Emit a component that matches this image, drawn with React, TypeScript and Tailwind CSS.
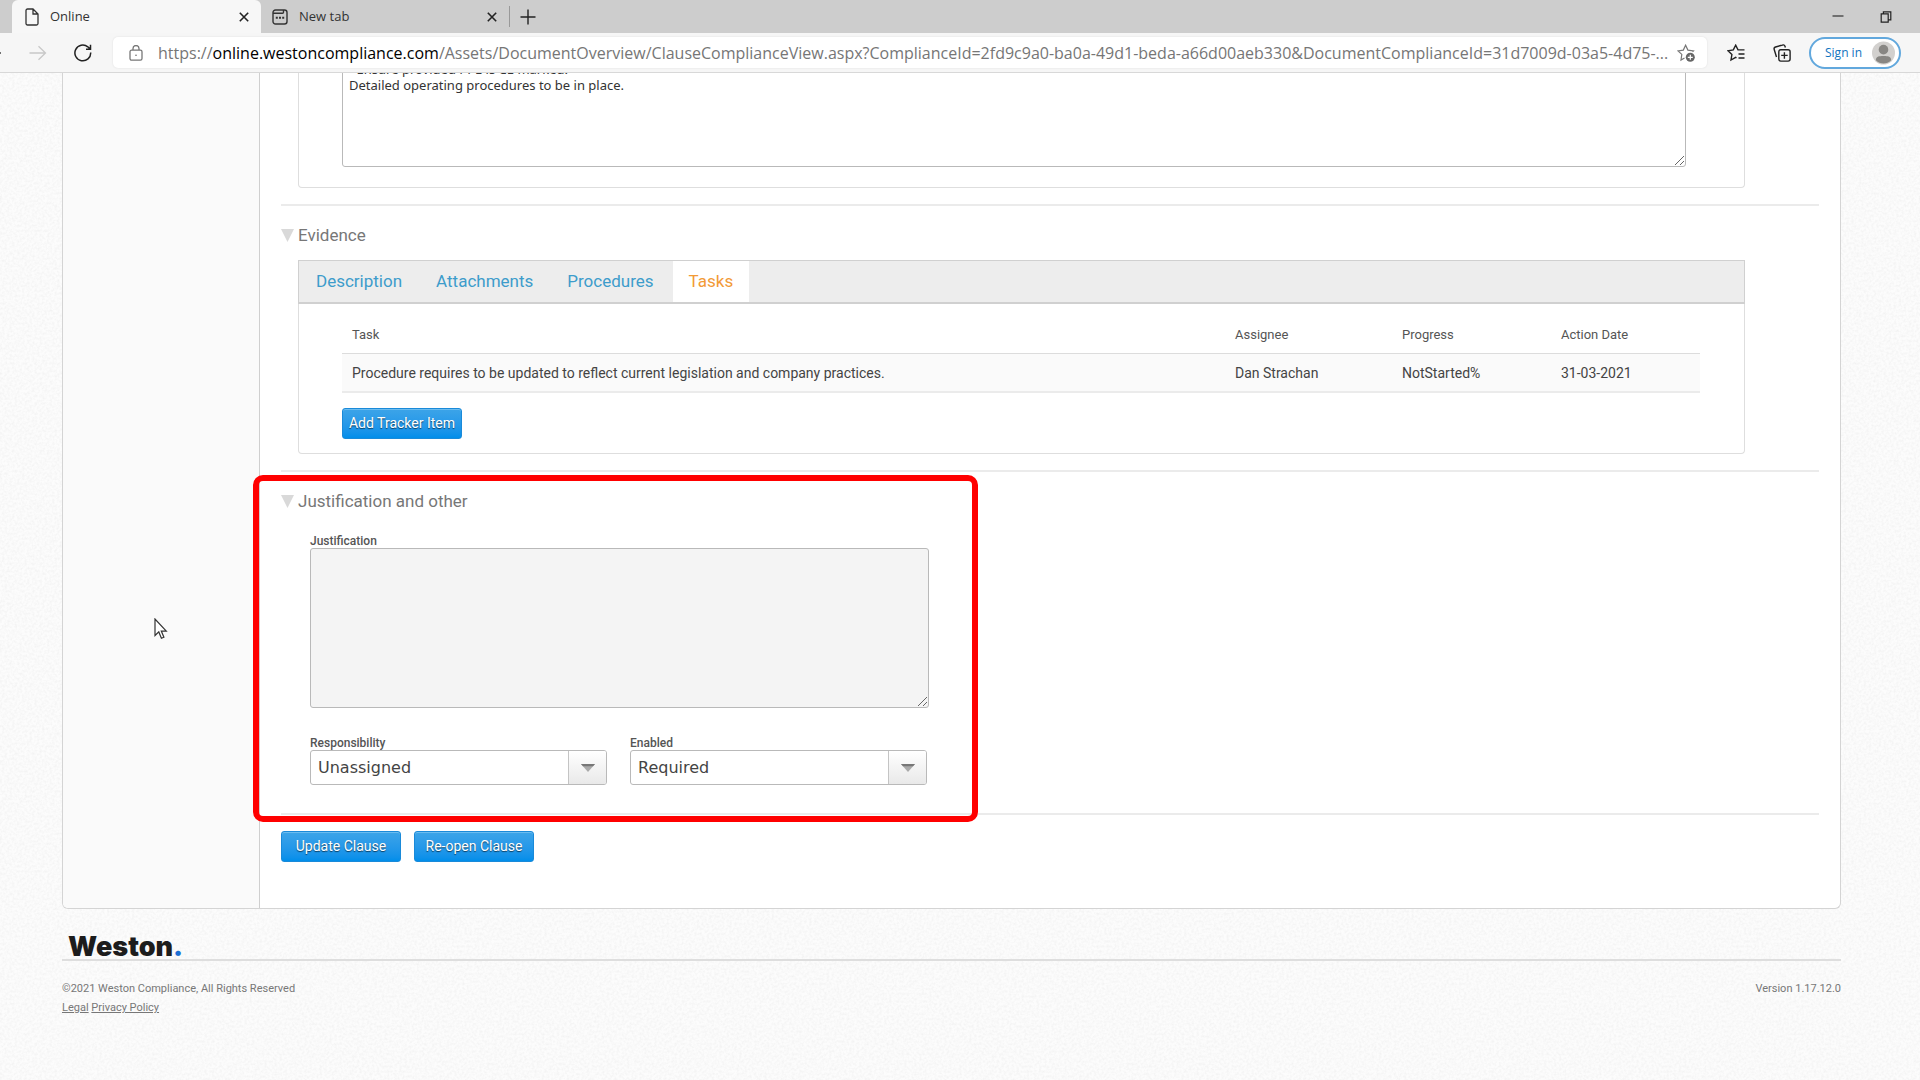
import React from "react";

const btn =
  "h-[31px] rounded-[3px] border border-[#1a8ad9] bg-gradient-to-b from-[#3ca4e8] to-[#008eea] text-[14px] leading-[18px] text-white shadow-[inset_0_1px_0_#6bbcf0] [text-shadow:0_1px_1px_#0009] pb-0.5";

function PageIcon() {
  return (
    <svg width="14" height="18" viewBox="0 0 14 18" fill="none" stroke="#333" strokeWidth="1.3">
      <path d="M2.500 1H8l5 5v9.500a1.500 1.500 0 0 1-1.500 1.500h-9A1.500 1.500 0 0 1 1 15.500v-13A1.500 1.500 0 0 1 2.500 1zM8 1v5h5" />
    </svg>
  );
}

function NewTabIcon() {
  return (
    <svg width="16" height="16" viewBox="0 0 16 16" fill="none" stroke="#333" strokeWidth="1.4">
      <rect x="1" y="1" width="14" height="14" rx="2.500" />
      <path d="M1 4.200h9.500a1 1 0 0 0 1-1V1" />
      <path d="M3.800 8.700h2M7 8.700h2M10.200 8.700h2" strokeWidth="2" />
    </svg>
  );
}

function CloseIcon() {
  return (
    <svg width="10" height="10" viewBox="0 0 10 10" stroke="#222" strokeWidth="1.600">
      <path d="M.8.800l8.400 8.400M9.200.800L.8 9.200" />
    </svg>
  );
}

function TabStrip() {
  return (
    <div className="flex h-[33px] items-stretch bg-[#cdcdcd] pl-3 text-[13px] text-[#333]">
      <div className="flex w-[249px] items-center rounded-t-md bg-[#f7f7f7] pr-3 pl-[13px]">
        <PageIcon />
        <span className="ml-[11px] flex-1">Online</span>
        <button aria-label="Close Online"><CloseIcon /></button>
      </div>
      <div className="flex w-[248px] items-center pr-3 pl-[11px]">
        <NewTabIcon />
        <span className="ml-[11px] flex-1">New tab</span>
        <button aria-label="Close New tab"><CloseIcon /></button>
      </div>
      <div className="my-1.5 w-px bg-[#999]" />
      <button aria-label="Open tab" className="ml-2.5">
        <svg width="16" height="16" viewBox="0 0 16 16" stroke="#222" strokeWidth="1.400"><path d="M8 .5v15M.5 8h15" /></svg>
      </button>
      <div className="flex-1" />
      <div className="flex items-center gap-9 pr-7">
        <button aria-label="Minimize">
          <svg width="12" height="12" viewBox="0 0 12 12" stroke="#333" strokeWidth="1.200"><path d="M0.500 5h11" /></svg>
        </button>
        <button aria-label="Restore">
          <svg width="12" height="12" viewBox="0 0 12 12" fill="none" stroke="#222" strokeWidth="1.200"><path d="M1.200 2.800h7v8.400h-7zM3.400 2.800V.8h7.400v8H8.400" /></svg>
        </button>
      </div>
    </div>
  );
}

function Toolbar() {
  return (
    <div className="flex h-10 items-center border-b border-[#d8d8d8] bg-[#f6f6f6] pr-[19px]">
      <button aria-label="Back" className="w-7">
        <svg width="4" height="16" viewBox="0 0 4 16" stroke="#444" strokeWidth="1.400"><path d="M0 8h1" /></svg>
      </button>
      <button aria-label="Forward">
        <svg width="20" height="16" viewBox="0 0 20 16" fill="none" stroke="#c8c8c8" strokeWidth="1.300"><path d="M1.500 8h16M10.500 1.200L17.500 8l-7 6.800" /></svg>
      </button>
      <button aria-label="Refresh" className="ml-[26px]">
        <svg width="18" height="18" viewBox="0 0 18 18" fill="none" stroke="#222" strokeWidth="1.500"><path d="M16.700 8.500A7.900 7.900 0 1 1 13.800 2.800L16.200 5M16.500.8v4.500h-4.500" /></svg>
      </button>
      <div className="ml-[21px] flex h-[31px] min-w-0 flex-1 items-center rounded-[5px] bg-white pr-3 pl-4 shadow-[0_0_2px_#ddd]">
        <svg width="14" height="16" viewBox="0 0 14 16" fill="none" stroke="#777" strokeWidth="1.300">
          <rect x="1" y="5.200" width="12" height="10" rx="1.600" /><path d="M4 5V3.500a3 3 0 0 1 6 0V5" /><circle cx="7" cy="10.200" r=".8" fill="#666" stroke="none" />
        </svg>
        <div className="ml-[15px] min-w-0 flex-1 truncate text-[16px] text-[#767676]">
          https://<span className="text-black">online.westoncompliance.com</span>/Assets/DocumentOverview/ClauseComplianceView.aspx?ComplianceId=2fd9c9a0-ba0a-49d1-beda-a66d00aeb330&amp;DocumentComplianceId=31d7009d-03a5-4d75-...
        </div>
        <button aria-label="Add to favorites">
          <svg width="18" height="18" viewBox="0 0 18 18" fill="none" stroke="#777" strokeWidth="1.200">
            <path d="M7.500 14L4 16l.8-5.600L1 6.900l5.300-.8L8.600 1.200l2.300 4.900 5.600.8-1 1" /><circle cx="13.300" cy="13.300" r="4.500" fill="#666" stroke="none" /><path d="M13.300 10.800v5M10.800 13.300h5" stroke="#fff" />
          </svg>
        </button>
      </div>
      <button aria-label="Favorites" className="ml-5">
        <svg width="18" height="18" viewBox="0 0 18 18" fill="none" stroke="#222" strokeWidth="1.400"><path d="M9.500 13.800L8.700 13.400 4 16l.9-5.500L1 6.700l5.300-.8L8.700 1.200l2.300 4.700h6.500M11.500 10h6M11.500 14h6" /></svg>
      </button>
      <button aria-label="Collections" className="ml-7">
        <svg width="18" height="18" viewBox="0 0 18 18" fill="none" stroke="#222" strokeWidth="1.400"><rect x="5.800" y="5.800" width="11.300" height="11.300" rx="2" /><path d="M11.400 8.200v6.500M8.200 11.400h6.500M3.500 13L1.200 5.500A2 2 0 0 1 2.500 3L9.500 1a2 2 0 0 1 2.500 1.300l.4 1.200" /></svg>
      </button>
      <button className="ml-[18px] flex h-8 w-[92px] items-center justify-between rounded-full border-2 border-[#62a8dd] bg-white pr-1 pl-3.5 text-[12px] text-[#1173c0]">
        Sign in
        <svg width="23" height="24" viewBox="0 0 24 24"><circle cx="12" cy="12" r="12" fill="#d2d0ce" /><circle cx="12" cy="8.500" r="5" fill="#888683" /><path d="M4 19.500c0-4 3-4.500 8-4.500s8 .5 8 4.500c-4.500 4.600-11.500 4.600-16 0z" fill="#888683" /></svg>
      </button>
    </div>
  );
}

function PaperTexture() {
  return (
    <svg className="pointer-events-none absolute inset-0 h-full w-full" aria-hidden="true">
      <filter id="paper">
        <feTurbulence type="fractalNoise" baseFrequency="0.4" numOctaves="2" stitchTiles="stitch" />
        <feColorMatrix values="0 0 0 0 0  0 0 0 0 0  0 0 0 0 0  0.07 0 0 0 -0.025" />
      </filter>
      <rect width="100%" height="100%" filter="url(#paper)" />
    </svg>
  );
}

function Heading({ children }: { children: React.ReactNode }) {
  return (
    <h2 className="flex items-center gap-1 text-[17px] leading-6 text-[#777]">
      <svg width="13" height="13" viewBox="0 0 13 13" fill="#d9d9d9"><path d="M0 0h13L6.500 13z" /></svg>
      {children}
    </h2>
  );
}

const fieldLabel = "block pt-0.5 text-[12px] leading-[14px] font-medium text-[#555]";

function Picker({ id, label, value }: { id: string; label: string; value: string }) {
  return (
    <div className="w-[297px]">
      <label htmlFor={id} className={fieldLabel}>{label}</label>
      <div className="relative">
        <select id={id} className="block h-[35px] w-full appearance-none rounded-[3px] border border-[#b9b9b9] bg-white pr-10 pl-[7px] font-['DejaVu_Sans',sans-serif] text-[16px] text-[#444]">
          <option>{value}</option>
        </select>
        <span className="pointer-events-none absolute inset-y-px right-px flex w-[38px] items-center justify-center rounded-r-[2px] border-l border-[#c4c4c4] bg-gradient-to-b from-white to-[#e9e9e9]">
          <svg width="14" height="8" viewBox="0 0 14 8"><path d="M0 0h14L7 8z" fill="#aaa" /><path d="M0 0h14l-2 2.300H2z" fill="#777" /></svg>
        </span>
      </div>
    </div>
  );
}

function Grip() {
  return (
    <svg className="pointer-events-none absolute right-0.5 bottom-0.5" width="9" height="9" viewBox="0 0 9 9" stroke="#666" strokeWidth="1"><path d="M0 9l9-9M5 9l4-4" /></svg>
  );
}

const tabs = ["Description", "Attachments", "Procedures", "Tasks"];

export default function App() {
  return (
    <div className="relative min-h-screen bg-[#fcfcfc] font-[Roboto,sans-serif] text-[#444]">
      <PaperTexture />
      <header className="relative font-['Open_Sans',sans-serif]">
        <TabStrip />
        <Toolbar />
      </header>
      <div className="relative mr-[79px] ml-[62px]">
        <main className="flex overflow-hidden rounded-b-md border border-t-0 border-[#d4d4d4] bg-white">
          <aside className="w-[196px] shrink-0 bg-[#fafafa]" />
          <div className="min-w-0 flex-1 border-l border-[#cfcfcf] pr-[21px] pb-[46px] pl-[21px]">
            <section className="mr-[74px] ml-[17px] rounded-b-[4px] border border-t-0 border-[#dedede] pr-[58px] pb-5 pl-[43px]">
              <div className="relative flex h-[94px] flex-col justify-end overflow-hidden">
                <textarea
                  aria-label="Clause notes"
                  className="block h-[111px] w-full shrink-0 resize-none overflow-hidden rounded-[3px] border border-[#b9b9b9] px-1.5 py-1 font-['Noto_Sans',sans-serif] text-[13px] leading-4 text-[#333]"
                  defaultValue={"- Ensure provided PPE is CE marked.\nDetailed operating procedures to be in place."}
                />
                <Grip />
              </div>
            </section>
            <hr className="mt-4 border-t-2 border-[#ebebeb]" />
            <section className="mt-[17px]">
              <Heading>Evidence</Heading>
              <div className="mt-[13px] mr-[74px] ml-[17px] rounded-b-[4px] border border-t-0 border-[#dedede]">
                <div role="tablist" className="-mx-px flex h-11 border border-b-2 border-[#d0d0d0] bg-[#ededed] text-[17px]">
                  {tabs.map((t) => (
                    <button
                      key={t}
                      role="tab"
                      aria-selected={t === "Tasks"}
                      className={t === "Tasks" ? "ml-0.5 bg-white px-4 text-[#f29a36]" : "px-[17px] text-[#3d9ccb]"}
                    >
                      {t}
                    </button>
                  ))}
                </div>
                <div className="pt-[11px] pr-11 pb-3.5 pl-[43px]">
                  <table className="w-full table-fixed text-left text-[14px]">
                    <colgroup>
                      <col />
                      <col className="w-[167px]" />
                      <col className="w-[159px]" />
                      <col className="w-[149px]" />
                    </colgroup>
                    <thead>
                      <tr className="h-[38px] border-b border-[#dcdcdc] text-[#555]">
                        {["Task", "Assignee", "Progress", "Action Date"].map((h) => (
                          <th key={h} className="pt-0.5 pl-2.5 text-[13px] font-normal">{h}</th>
                        ))}
                      </tr>
                    </thead>
                    <tbody>
                      <tr className="h-[39px] border-b-2 border-[#ebebeb] bg-[#fafafa]">
                        {["Procedure requires to be updated to reflect current legislation and company practices.", "Dan Strachan", "NotStarted%", "31-03-2021"].map((c) => (
                          <td key={c} className="pt-0.5 pl-2.5">{c}</td>
                        ))}
                      </tr>
                    </tbody>
                  </table>
                  <button className={"mt-[15px] block w-[120px] " + btn}>Add Tracker Item</button>
                </div>
              </div>
            </section>
            <hr className="mt-4 border-t-2 border-[#ebebeb]" />
            <section className="mt-[17px]">
              <Heading>Justification and other</Heading>
              <div className="mt-[19px] ml-[29px] w-[619px]">
                <label htmlFor="justification" className={fieldLabel}>Justification</label>
                <div className="relative">
                  <textarea id="justification" className="block h-40 w-full resize-none rounded-[3px] border border-[#b9b9b9] bg-[#f4f4f4]" />
                  <Grip />
                </div>
              </div>
              <div className="mt-[26px] ml-[29px] flex gap-[23px]">
                <Picker id="responsibility" label="Responsibility" value="Unassigned" />
                <Picker id="enabled" label="Enabled" value="Required" />
              </div>
            </section>
            <hr className="mt-7 border-t-2 border-[#ebebeb]" />
            <div className="mt-4 flex gap-[13px]">
              <button className={"w-[120px] " + btn}>Update Clause</button>
              <button className={"w-[120px] " + btn}>Re-open Clause</button>
            </div>
          </div>
        </main>
        <div className="pointer-events-none absolute top-[402px] left-[191px] h-[347px] w-[725px] rounded-[10px] border-6 border-[#f00]" />
        <svg className="pointer-events-none absolute top-[545px] left-[92px]" width="14" height="22" viewBox="0 0 14 22" fill="#fff" stroke="#333" strokeWidth="1.200">
          <path d="M1 1v16.500l3.800-3.600 2.600 6.300 2.500-1-2.600-6.100h5z" />
        </svg>
        <footer className="text-[11px] leading-[19px] text-[#777]">
          <div className="mt-[26px] border-b-2 border-[#dedede] pl-1.5 font-[Inter,sans-serif] text-[27px] leading-[24px] font-black text-[#1c1c1c]">
            Weston<span className="text-[#1a6fd4]">.</span>
          </div>
          <div className="mt-[18px] flex justify-between">
            <p>
              ©2021 Weston Compliance, All Rights Reserved
              <br />
              <a href="#legal" className="underline">Legal</a> <a href="#privacy" className="underline">Privacy Policy</a>
            </p>
            <p>Version 1.17.12.0</p>
          </div>
        </footer>
      </div>
    </div>
  );
}
